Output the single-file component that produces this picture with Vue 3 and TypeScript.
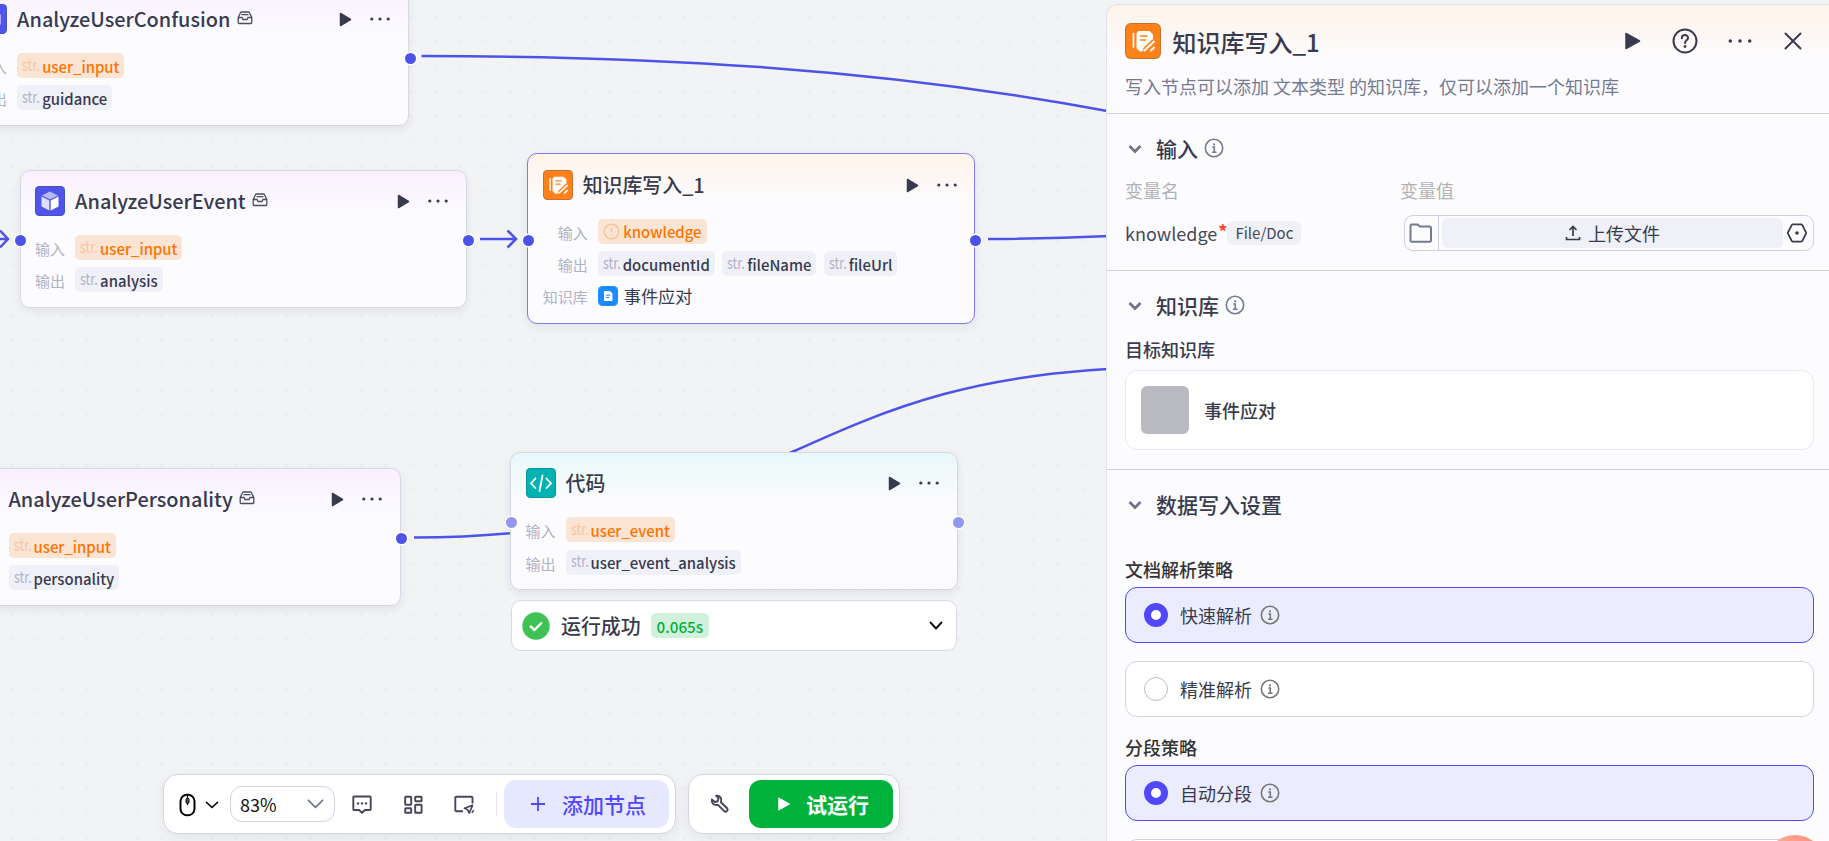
<script setup lang="ts">
interface Tag { text: string; kind: 'warn' | 'plain' | 'error' }
interface Row { label: string; tags?: Tag[]; dataset?: string }
interface FlowNode {
  id: string
  title: string
  icon: 'cube' | 'write' | 'code'
  x: number
  y: number
  portY: number
  boxed?: boolean
  selected?: boolean
  faded?: boolean
  tone: string
  rows: Row[]
}

const io = (input: string, output: string): Row[] => [
  { label: '输入', tags: [{ text: input, kind: 'warn' }] },
  { label: '输出', tags: [{ text: output, kind: 'plain' }] },
]

const nodes: FlowNode[] = [
  { id: 'confusion', title: 'AnalyzeUserConfusion', icon: 'cube', x: -38.4, y: -12, portY: 69, boxed: true, tone: 'pink', rows: io('user_input', 'guidance') },
  { id: 'event', title: 'AnalyzeUserEvent', icon: 'cube', x: 19.6, y: 170, portY: 69, boxed: true, tone: 'pink', rows: io('user_input', 'analysis') },
  {
    id: 'write', title: '知识库写入_1', icon: 'write', x: 527.2, y: 153, portY: 86, selected: true, tone: 'orange',
    rows: [
      { label: '输入', tags: [{ text: 'knowledge', kind: 'error' }] },
      { label: '输出', tags: [{ text: 'documentId', kind: 'plain' }, { text: 'fileName', kind: 'plain' }, { text: 'fileUrl', kind: 'plain' }] },
      { label: '知识库', dataset: '事件应对' },
    ],
  },
  { id: 'personality', title: 'AnalyzeUserPersonality', icon: 'cube', x: -47, y: 468, portY: 69, boxed: true, tone: 'pink', rows: io('user_input', 'personality') },
  { id: 'code', title: '代码', icon: 'code', x: 510, y: 452.4, portY: 69, faded: true, tone: 'teal', rows: io('user_event', 'user_event_analysis') },
]

const edges: string[] = [
  'M421.500 56 C650 56 880 68 1110 111.500',
  'M-20 239 H7 M0 230.500 L8 239 L0 247.500',
  'M480 239 H515 M507.500 230.500 L516 239 L507.500 247.500',
  'M988 239 C1030 239 1070 238 1110 236',
  'M414 537.500 C791 537.500 791 367.500 1168 367.500',
]
</script>

<template>
  <div class="app">
    <div class="canvas">
      <svg class="edges" width="1829" height="841" viewBox="0 0 1829 841">
        <path v-for="d in edges" :key="d" :d="d" />
      </svg>

      <article
        v-for="n in nodes"
        :key="n.id"
        class="node"
        :class="[n.tone, { selected: n.selected, faded: n.faded }]"
        :style="{ left: n.x + 'px', top: n.y + 'px' }"
      >
        <header class="node-head">
          <span class="node-icon" :class="n.icon">
            <svg v-if="n.icon === 'cube'" viewBox="0 0 30 30">
              <path d="M15 5.500 23 9.500 15 13.500 7 9.500z" fill="#b8baf6" />
              <path d="M6.500 10.500 14.300 14.400V24.500L6.500 20.500z" fill="#dddefb" />
              <path d="M23.500 10.500 15.700 14.400V24.500L23.500 20.500z" fill="#fff" />
            </svg>
            <svg v-else-if="n.icon === 'write'" viewBox="0 0 36 36">
              <path d="M8.500 10.500V24" stroke="#fff" stroke-width="1.700" stroke-linecap="round" />
              <path d="M13.500 8H24.500L28 11.500V16L17 28.500H15L11.500 25.500V10z" fill="#fff" />
              <path d="M15.500 13H22 M15.500 17H20.500" stroke="#ff811a" stroke-width="1.600" stroke-linecap="round" />
              <path d="M19.500 27.500 28.500 18.500 M26 27.500H28" stroke="#ff811a" stroke-width="5" />
              <path d="M19.500 27.500 29 18.500 M26 27.500 29 24.500" stroke="#fff" stroke-width="1.900" stroke-linecap="round" />
            </svg>
            <svg v-else viewBox="0 0 30 30">
              <path d="M9.500 10.500 5 15.300 9.500 20 M20.500 10.500 25 15.300 20.500 20 M16.500 7.500 13.500 23" fill="none" stroke="#fff" stroke-width="1.800" stroke-linecap="round" stroke-linejoin="round" />
            </svg>
          </span>
          <h3>{{ n.title }}</h3>
          <svg v-if="n.boxed" class="tray" width="16" height="14" viewBox="0 0 16 14">
            <path d="M1.200 6.500 3.600 1.500Q3.900 1 4.500 1H11.500Q12.100 1 12.400 1.500L14.800 6.500V11.500Q14.800 12.500 13.800 12.500H2.200Q1.200 12.500 1.200 11.500z M1.500 6.500H5L6 8.500H10L11 6.500H14.500 M4.500 3.700H11.500" />
          </svg>
          <span class="grow"></span>
          <svg class="play" width="13" height="15" viewBox="0 0 13 15"><path d="M1.500 1.500 11.500 7.500 1.500 13.500z" /></svg>
          <svg class="dots" width="20" height="6" viewBox="0 0 20 6"><circle cx="1.800" cy="3" r="1.600" /><circle cx="10" cy="3" r="1.600" /><circle cx="18.200" cy="3" r="1.600" /></svg>
        </header>
        <div class="node-rows">
          <template v-for="r in n.rows" :key="r.label">
            <span class="row-label">{{ r.label }}</span>
            <div class="row-value">
              <span v-for="t in r.tags" :key="t.text" class="tag" :class="t.kind">
                <svg v-if="t.kind === 'error'" width="17" height="17" viewBox="0 0 17 17"><circle cx="8.500" cy="8.500" r="7.300" /><path d="M8.500 4.700V9.300 M8.500 11V12.300" /></svg>
                <i v-else>str.</i>{{ t.text }}
              </span>
              <span v-if="r.dataset" class="dataset">
                <svg width="20" height="20" viewBox="0 0 20 20">
                  <rect width="20" height="20" rx="4.500" fill="#1a8cff" />
                  <path d="M6.500 5.500H12L14 7.500V14.500H6.500z" fill="#fff" stroke="#fff" stroke-linejoin="round" />
                  <path d="M8 9.200H12.300 M8 11.500H11" stroke="#1a8cff" />
                </svg>
                {{ r.dataset }}
              </span>
            </div>
          </template>
        </div>
        <b class="port in" :style="{ top: n.portY + 'px' }"></b>
        <b class="port out" :style="{ top: n.portY + 'px' }"></b>
      </article>

      <div class="result">
        <svg width="28" height="28" viewBox="0 0 28 28"><circle cx="14" cy="14" r="13.700" fill="#3ec254" /><path d="M8.700 14.500 12.500 18 19.300 11" fill="none" stroke="#fff" stroke-width="2.400" stroke-linecap="round" stroke-linejoin="round" /></svg>
        <strong>运行成功</strong>
        <span class="time">0.065s</span>
        <span class="grow"></span>
        <svg width="14" height="10" viewBox="0 0 14 10"><path d="M1.500 1.500 7 7.500 12.500 1.500" fill="none" stroke="#111" stroke-width="1.900" stroke-linecap="round" stroke-linejoin="round" /></svg>
      </div>
    </div>

    <div class="toolbars">
      <div class="toolbar main-tools">
        <svg class="mouse" width="17" height="24" viewBox="0 0 17 24"><rect x="1.500" y="1.700" width="14" height="20.600" rx="6.500" fill="none" stroke="#050505" stroke-width="2" /><path d="M8.500 2V12" stroke="#050505" stroke-width="1.200" /><rect x="7" y="5" width="3" height="5.500" rx="1.500" fill="#555" stroke="#050505" /></svg>
        <svg class="chev-mouse" width="14" height="8" viewBox="0 0 14 8"><path d="M1.500 1.300 7 6.500 12.500 1.300" fill="none" stroke="#111" stroke-width="1.700" stroke-linecap="round" stroke-linejoin="round" /></svg>
        <div class="zoom">83%<svg width="17" height="10" viewBox="0 0 17 10"><path d="M1.500 1.300 8.500 8.300 15.500 1.300" fill="none" stroke="#757a90" stroke-width="1.800" stroke-linecap="round" stroke-linejoin="round" /></svg></div>
        <svg class="tool comment" width="20" height="20" viewBox="0 0 20 20"><path d="M2.200 1.500H17.800Q18.700 1.500 18.700 2.400V14Q18.700 15 17.800 15H13L10 17.700 7 15H2.200Q1.300 15 1.300 14V2.400Q1.300 1.500 2.200 1.500z" /><path d="M6 8.400H6.100 M10 8.400H10.100 M14 8.400H14.100" stroke-width="2.400" stroke-linecap="round" /></svg>
        <svg class="tool gridic" width="19" height="20" viewBox="0 0 19 20"><rect x="1.200" y="1.700" width="6" height="8" rx=".6" /><rect x="11.200" y="1.700" width="6.400" height="4.500" rx=".6" /><rect x="1.200" y="13.300" width="6" height="4.500" rx=".6" /><rect x="11.200" y="9.800" width="6.400" height="8" rx=".6" /></svg>
        <svg class="tool" width="21" height="20" viewBox="0 0 21 20"><path d="M9 16.300H2.500Q1.300 16.300 1.300 15.300V2.800Q1.300 1.700 2.400 1.700H17.300Q18.500 1.700 18.500 2.800V8.500" /><path d="M18.500 10.300 10.500 13.300 13.700 14.800 15.300 18z" stroke-linejoin="round" stroke-width="1.700" /><path d="M17.800 17.800 19.800 15.300" stroke-width="1.500" /></svg>
        <i class="sep"></i>
        <button class="add"><svg width="16" height="16" viewBox="0 0 16 16"><path d="M8 1V15 M1 8H15" stroke="#5147ff" stroke-width="1.800" /></svg>添加节点</button>
      </div>
      <div class="toolbar run-tools">
        <svg class="wrench" width="20" height="20" viewBox="0 0 20 20"><path d="M6.200 1.800 8.500 4.200 7.700 7.300 4.700 8 1.900 5.500C1 9 4 11.800 7.900 10.800L14.500 17.400C15.700 18.600 18.700 16.300 17.300 14.500L11 8.300C12.300 3.700 9.500 1.200 6.200 1.800z" /></svg>
        <button class="run"><svg width="14" height="16" viewBox="0 0 14 16"><path d="M1.800 2 12.500 8 1.800 14z" fill="#fff" stroke="#fff" stroke-width="1" stroke-linejoin="round" /></svg>试运行</button>
      </div>
    </div>

    <aside class="panel">
      <header class="panel-head">
        <div class="panel-title">
          <span class="node-icon write big">
            <svg viewBox="0 0 36 36">
              <path d="M8.500 10.500V24" stroke="#fff" stroke-width="1.700" stroke-linecap="round" />
              <path d="M13.500 8H24.500L28 11.500V16L17 28.500H15L11.500 25.500V10z" fill="#fff" />
              <path d="M15.500 13H22 M15.500 17H20.500" stroke="#ff811a" stroke-width="1.600" stroke-linecap="round" />
              <path d="M19.500 27.500 28.500 18.500 M26 27.500H28" stroke="#ff811a" stroke-width="5" />
              <path d="M19.500 27.500 29 18.500 M26 27.500 29 24.500" stroke="#fff" stroke-width="1.900" stroke-linecap="round" />
            </svg>
          </span>
          <h2>知识库写入_1</h2>
          <span class="grow"></span>
          <svg class="act a1" width="18" height="20" viewBox="0 0 18 20"><path d="M2 2.500 15.500 10 2 17.500z" fill="#383b4d" stroke="#383b4d" stroke-width="1.500" stroke-linejoin="round" /></svg>
          <svg class="act a2" width="26" height="26" viewBox="0 0 26 26"><circle cx="13" cy="13" r="11.500" fill="none" stroke="#383b4d" stroke-width="2" /><path d="M9.800 10.300C10 5.800 16.300 6.300 16 10.200C15.800 12.300 13 12.500 13 15" fill="none" stroke="#383b4d" stroke-width="2" stroke-linecap="round" /><circle cx="13" cy="18.500" r="1.400" fill="#383b4d" /></svg>
          <svg class="act a3" width="24" height="6" viewBox="0 0 24 6"><circle cx="2.300" cy="3" r="1.800" /><circle cx="12" cy="3" r="1.800" /><circle cx="21.700" cy="3" r="1.800" /></svg>
          <svg class="act" width="18" height="18" viewBox="0 0 18 18"><path d="M1.500 1.500 16.500 16.500 M16.500 1.500 1.500 16.500" stroke="#383b4d" stroke-width="2" stroke-linecap="round" /></svg>
        </div>
        <p>写入节点可以添加 文本类型 的知识库，仅可以添加一个知识库</p>
      </header>

      <section class="sec inputs">
        <h4>
          <svg class="fold" width="14" height="10" viewBox="0 0 14 10"><path d="M1.500 2 7 7.500 12.500 2" /></svg>输入
          <svg class="info" width="20" height="20" viewBox="0 0 20 20"><circle cx="10" cy="10" r="8.700" /><path d="M8.300 9H10.300V14 M8 14.200H12.500" /><circle class="pt" cx="10" cy="6.300" r="1.100" /></svg>
        </h4>
        <div class="cols head"><span>变量名</span><span>变量值</span></div>
        <div class="cols">
          <div class="var">knowledge<em>*</em><span class="type">File/Doc</span></div>
          <div class="file-input">
            <span class="folder"><svg width="24" height="20" viewBox="0 0 24 20"><path d="M3 1.500H8.500L11 3.500H20.500Q22 3.500 22 5V17.500Q22 18.700 20.500 18.700H3Q1.500 18.700 1.500 17.500V3Q1.500 1.500 3 1.500z" /></svg></span>
            <button class="upload"><svg width="16" height="16" viewBox="0 0 16 16"><path d="M8 11V2 M4.500 5 8 1.500 11.500 5 M1.500 12V14.500H14.500V12" /></svg>上传文件</button>
            <svg class="hex" width="20" height="20" viewBox="0 0 20 20"><path d="M5.800 1.300H14.200Q14.800 1.300 15.200 1.900L19 9.300Q19.300 10 19 10.700L15.200 18.100Q14.800 18.700 14.200 18.700H5.800Q5.200 18.700 4.800 18.100L1 10.700Q.7 10 1 9.300L4.800 1.900Q5.200 1.300 5.800 1.300z" /><circle cx="10" cy="10" r="1.800" /></svg>
          </div>
        </div>
      </section>

      <section class="sec target">
        <h4>
          <svg class="fold" width="14" height="10" viewBox="0 0 14 10"><path d="M1.500 2 7 7.500 12.500 2" /></svg>知识库
          <svg class="info" width="20" height="20" viewBox="0 0 20 20"><circle cx="10" cy="10" r="8.700" /><path d="M8.300 9H10.300V14 M8 14.200H12.500" /><circle class="pt" cx="10" cy="6.300" r="1.100" /></svg>
        </h4>
        <h5>目标知识库</h5>
        <div class="base"><span class="thumb"></span>事件应对</div>
      </section>

      <section class="sec settings">
        <h4><svg class="fold" width="14" height="10" viewBox="0 0 14 10"><path d="M1.500 2 7 7.500 12.500 2" /></svg>数据写入设置</h4>
        <h5 class="first">文档解析策略</h5>
        <div class="options">
          <label class="option on"><i></i>快速解析<svg class="info grey" width="20" height="20" viewBox="0 0 20 20"><circle cx="10" cy="10" r="8.700" /><path d="M8.300 9H10.300V14 M8 14.200H12.500" /><circle class="pt" cx="10" cy="6.300" r="1.100" /></svg></label>
          <label class="option"><i></i>精准解析<svg class="info grey" width="20" height="20" viewBox="0 0 20 20"><circle cx="10" cy="10" r="8.700" /><path d="M8.300 9H10.300V14 M8 14.200H12.500" /><circle class="pt" cx="10" cy="6.300" r="1.100" /></svg></label>
        </div>
        <h5 class="second">分段策略</h5>
        <div class="options">
          <label class="option on"><i></i>自动分段<svg class="info grey" width="20" height="20" viewBox="0 0 20 20"><circle cx="10" cy="10" r="8.700" /><path d="M8.300 9H10.300V14 M8 14.200H12.500" /><circle class="pt" cx="10" cy="6.300" r="1.100" /></svg></label>
          <label class="option"></label>
        </div>
      </section>
    </aside>
    <div class="bubble"></div>
  </div>
</template>

<style>
html, body { margin: 0; overflow: hidden; }
</style>

<style scoped>
.app, .app * { box-sizing: border-box; }
.app {
  position: relative; width: 1829px; height: 841px; overflow: hidden;
  display: flex; justify-content: flex-end;
  font-family: "Noto Sans CJK SC", sans-serif; color: #383b4d; background: #f2f3f5;
}
h2, h3, h4, h5, p { margin: 0; font-weight: 400; }
button { border: 0; padding: 0; font: inherit; display: flex; align-items: center; }
svg { flex: none; display: block; }
.grow { flex: 1; }

.canvas {
  position: absolute; inset: 0;
  background: radial-gradient(circle, #ecedf0 1.200px, transparent 1.700px) 0.100px 4.500px / 24.900px 24.900px #f2f3f5;
}
.edges { position: absolute; inset: 0; }
.edges path { fill: none; stroke: #4d53e8; stroke-width: 2.500; }

.node {
  position: absolute; width: 447.800px; padding: 14.500px 14.500px 14.800px; border: 1px solid #d6d8e6; border-radius: 10px;
  background: #fcfcff; box-shadow: 0 3px 8px rgba(40, 44, 70, .08);
}
.node.pink { background: linear-gradient(#f9f0ff, #fcfcff 50px); }
.node.orange { background: linear-gradient(#fff3ea, #fcfcff 50px); }
.node.teal { background: linear-gradient(#e8f8f8, #fcfcff 50px); }
.node.selected { border-color: #8078f5; padding-top: 15.500px; }
.node-head { display: flex; align-items: center; height: 30px; }
.node-icon { width: 30px; height: 30px; flex: none; border-radius: 4.500px; box-shadow: inset 0 0 0 1px rgba(30, 70, 100, .25); }
.node-icon svg { width: 100%; height: 100%; }
.cube { background: #5054e8; }
.write { background: #ff811a; }
.code { background: #00b2b2; }
.node-head h3 { margin-left: 10px; font-size: 19.900px; line-height: 30px; font-weight: 500; white-space: nowrap; padding-top: .5px; }
.tray { margin: -1px 0 0 6.500px; fill: none; stroke: #4a4d60; stroke-width: 1.300; }
.play { fill: #383b4d; stroke: #383b4d; stroke-width: 1.500; stroke-linejoin: round; margin: 1px 18px 0 0; }
.dots { fill: #383b4d; margin: 1px 3.500px 0 0; }
.selected .play { margin-right: 17.500px; }
.selected .dots { margin-right: 2.500px; }
.node-rows { display: grid; grid-template-columns: auto 1fr; gap: 7.300px 10px; margin-top: 19.500px; }
.selected .node-rows { margin-top: 19.200px; }
.row-label { font-size: 15px; line-height: 27px; height: 25px; color: #b0b2c8; text-align: right; }
.row-value { display: flex; gap: 7.300px; height: 25px; }
.tag { display: flex; align-items: center; height: 25px; padding: 1.500px 5px 0; border-radius: 5px; font-size: 14.900px; line-height: 25px; font-weight: 500; background: #f0f0f8; white-space: nowrap; }
.tag i { font-style: normal; font-weight: 400; font-size: 16.500px; color: #b0b2c8; width: 20px; margin-top: -4px; transform: scaleX(.75); transform-origin: left; }
.tag.warn, .tag.error { background: #fae5d5; color: #ff7300; }
.tag.warn i { color: #f9c4a0; }
.tag svg { fill: none; stroke: #fac09a; stroke-width: 1.400; margin: -1px 3.500px 0 0; }
.dataset { display: flex; align-items: center; gap: 6px; font-size: 17.200px; line-height: 26px; }
.port { position: absolute; width: 11px; height: 11px; margin: -5.500px; border-radius: 50%; background: #4d53e8; box-shadow: 0 0 0 1.500px #fff; }
.port.in { left: 0; }
.port.out { right: 0; margin-right: -7.500px; }
.faded .port { background: #9397f1; }

.result {
  position: absolute; left: 511px; top: 600px; width: 446px; height: 51px; padding: 0 13px 0 10px;
  border: 1px solid #d9dae8; border-radius: 10px; background: #fff; display: flex; align-items: center;
}
.result strong { margin-left: 11px; font-size: 19.900px; font-weight: 500; }
.time { margin-left: 10px; height: 25px; padding: 0 6px; border-radius: 5px; background: #d2f1dc; color: #00b23c; font-size: 15.200px; line-height: 26px; font-weight: 500; }

.toolbars { position: absolute; left: 163px; top: 774px; display: flex; gap: 12.500px; }
.toolbar { display: flex; align-items: center; height: 60px; border: 1px solid #d4d6e6; border-radius: 15px; background: #fff; box-shadow: 0 4px 12px rgba(40, 44, 70, .07); }
.main-tools { width: 512.500px; padding: 0 5px 0 15px; }
.run-tools { width: 212px; padding: 0 5px 0 21px; }
.mouse { margin: 1px 10px 0 0; }
.chev-mouse { margin: 2px 0 0 -1px; }
.zoom { width: 105px; height: 36px; margin: 0 17px 0 11px; padding: 0 10px 0 9px; border: 1px solid #cfd1e4; border-radius: 12px; display: flex; align-items: center; justify-content: space-between; font-size: 18px; color: #111; }
.tool { fill: none; stroke: #44475a; stroke-width: 1.900; margin-top: 1px; }
.comment { margin-right: 32px; }
.gridic { margin-right: 31px; }
.sep { width: 1px; height: 24px; margin: 0 7px 0 21px; background: #e4e5ef; }
.add, .run { height: 48px; border-radius: 12px; font-size: 21px; font-weight: 700; }
.add { width: 165px; padding-left: 26px; gap: 16px; background: #e6e8ff; color: #5147ff; font-weight: 500; }
.wrench { fill: none; stroke: #44475a; stroke-width: 1.900; stroke-linejoin: round; }
.run { width: 144px; margin-left: 19px; padding-left: 28px; gap: 15px; background: #00b23c; color: #fff; }

.panel {
  position: relative; width: 723px; height: 850px; margin-top: 4px; flex: none;
  border: 1px solid #e0e2ef; border-right: 0; border-radius: 12px 0 0 12px;
  background: linear-gradient(#fff3ea, #fcfcff 58px);
}
.panel-head { height: 109px; padding: 18px 27px 0 18px; border-bottom: 1px solid #cfd1e2; }
.panel-title { display: flex; align-items: center; height: 36px; }
.node-icon.big { width: 36px; height: 36px; border-radius: 6px; }
.panel-title h2 { margin-left: 11.500px; font-size: 24px; line-height: 36px; font-weight: 500; padding-top: 2px; }
.a1 { margin-right: 30px; }
.a2 { margin-right: 30px; }
.a3 { margin-right: 32px; fill: #383b4d; }
.panel-head p { margin-top: 12px; font-size: 18px; line-height: 30px; color: #757a90; white-space: nowrap; }
.sec { padding: 0 15px 0 18px; border-bottom: 1px solid #cfd1e2; }
.sec h4 { display: flex; align-items: center; height: 30px; font-size: 21px; line-height: 30px; font-weight: 500; padding-left: 3px; }
.fold { fill: none; stroke: #6f7489; stroke-width: 2.700; margin: 2px 14px 0 0; }
.info { margin-left: 6px; fill: none; stroke: #757a90; stroke-width: 1.600; }
.info .pt { fill: #757a90; stroke: none; }
.info.grey { stroke: #777; }
.info.grey .pt { fill: #777; }
.inputs { height: 157px; padding-top: 19px; }
.cols { display: grid; grid-template-columns: 279px 410px; align-items: center; font-size: 18px; }
.cols.head { height: 28px; margin-top: 13px; color: #b2b2b2; }
.cols.head span:last-child { margin-left: -4px; }
.inputs .cols:last-child { margin-top: 10px; height: 38px; }
.var { display: flex; align-items: center; color: #45485a; margin-top: -1px; }
.var em { font-style: normal; color: #ff441e; font-weight: 700; margin: -3px 1px 0; }
.type { height: 24px; padding: 0 8px; margin-left: -1px; border-radius: 6px; background: #f0f0f7; font-size: 15px; line-height: 24px; }
.file-input { display: flex; align-items: center; height: 36px; border: 1px solid #cfd1e2; border-radius: 9px; }
.folder { width: 34px; height: 34px; border-right: 1px solid #cfd1e2; display: grid; place-items: center; }
.folder svg { fill: none; stroke: #757a90; stroke-width: 2; margin-left: -1px; }
.upload { flex: 1; height: 30px; margin: 0 4px 0 3px; border-radius: 6px; background: #f0f0f8; justify-content: center; gap: 7px; color: #383b4d; }
.upload svg { fill: none; stroke: #383b4d; stroke-width: 1.700; }
.hex { margin-right: 6px; fill: none; stroke: #383b4d; stroke-width: 1.800; }
.hex circle { fill: #383b4d; stroke: none; }
.target { height: 199px; padding-top: 19px; }
.sec h5 { font-size: 18px; line-height: 27px; font-weight: 500; }
.target h5 { margin-top: 16px; }
.base { margin-top: 7px; height: 80px; padding: 0 15px; border: 1px solid #e7e8f1; border-radius: 12px; background: #fff; display: flex; align-items: center; gap: 15px; font-size: 18px; font-weight: 500; }
.thumb { width: 48px; height: 48px; border-radius: 6px; background: #b9b9c2; }
.settings { padding-top: 19px; }
.first { margin-top: 37px; color: #333; }
.second { margin-top: 17px; color: #333; }
.options { display: flex; flex-direction: column; gap: 18px; margin-top: 4px; }
.option { display: flex; align-items: center; height: 56px; padding-left: 18px; border: 1px solid #d0d2e3; border-radius: 12px; background: #fff; font-size: 18px; }
.option i { width: 24px; height: 24px; margin-right: 12px; border: 1px solid #b9bbc9; border-radius: 50%; background: #fff; }
.option .info { margin-left: 7.500px; }
.option.on { border-color: #5147ff; background: #ebecfe; }
.option.on i { border: 7.500px solid #5147ff; }
.bubble { position: absolute; left: 1765px; top: 835px; width: 60px; height: 60px; border-radius: 50%; background: linear-gradient(90deg, #ffb09b, #ff8c78); }
</style>
